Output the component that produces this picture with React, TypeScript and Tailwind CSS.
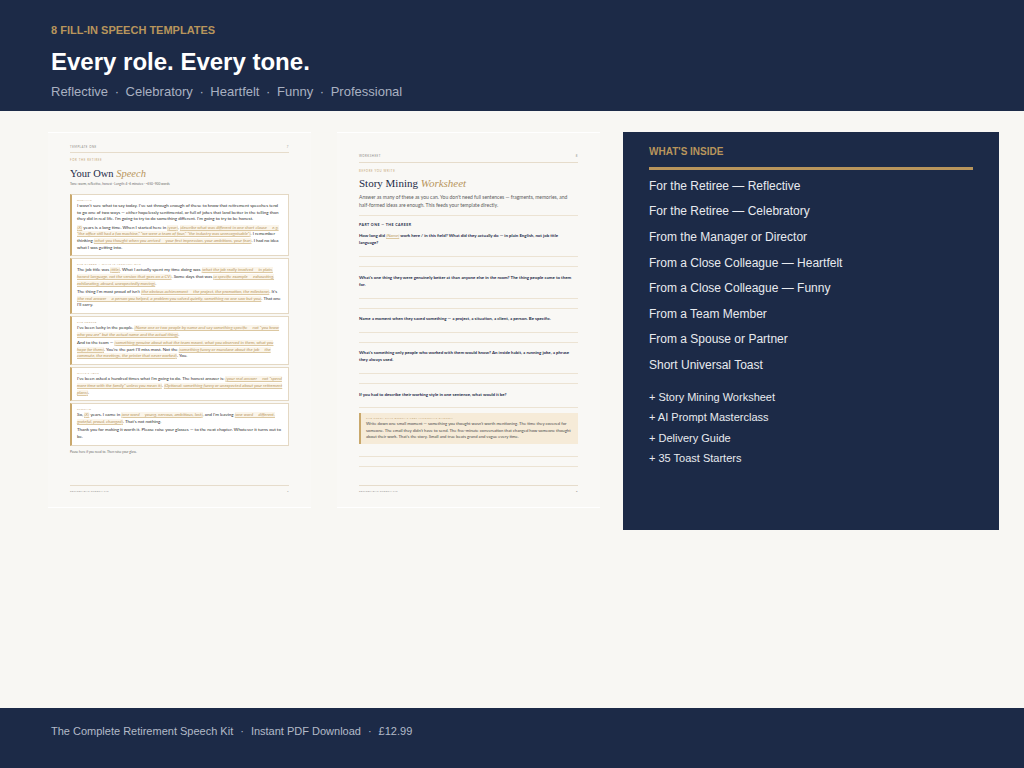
import React from 'react';

const navy = 'bg-[#1c2a47]';

function Ph({ children }: { children: React.ReactNode }) {
  return <span className="italic text-[#b8955c] underline decoration-[#dcc8a2] bg-[#fbf5ea]">[{children}]</span>;
}

function Box({ label, children }: { label: string; children: React.ReactNode }) {
  return (
    <div className="bg-white border border-[#e4d8c3] border-l-2 border-l-[#c9a86c] pl-[5px] pr-[5px] pt-[3px] pb-[4px]">
      <div className="text-[2.6px] leading-[4px] tracking-[0.18em] uppercase text-[#c0a170] mb-[1px]">{label}</div>
      <div className="flex flex-col gap-[1.5px] text-[4.45px] leading-[6.7px] text-[#2d2d2d]">{children}</div>
    </div>
  );
}

function PageOne() {
  return (
    <div className="w-[263px] h-[376px] shrink-0 bg-[#f9f8f5] border-t border-b border-white px-[22px] pt-[12px] flex flex-col" style={{ fontFamily: 'Lato, "Noto Sans", sans-serif' }}>
      <div className="flex justify-between text-[2.8px] leading-[4px] tracking-[0.18em] uppercase text-[#8c8a86] pb-[3px] border-b border-[#e6dccb]">
        <span>Template One</span>
        <span>7</span>
      </div>
      <div className="mt-[5px] text-[2.8px] leading-[4px] tracking-[0.22em] uppercase text-[#c7a877]">For the Retiree</div>
      <div className="mt-[6px] text-[10.5px] leading-[12px] text-[#1c2a47]" style={{ fontFamily: '"Liberation Serif", serif' }}>
        Your Own <span className="italic text-[#b8955c]">Speech</span>
      </div>
      <div className="mt-[2px] text-[3.2px] leading-[4px] text-[#6b6b6b]">Tone: warm, reflective, honest · Length: 4–6 minutes · ~650–900 words</div>
      <div className="mt-[8px] flex flex-col gap-[2px]">
        <Box label="Opening">
          <p>I wasn't sure what to say today. I've sat through enough of these to know that retirement speeches tend to go one of two ways — either hopelessly sentimental, or full of jokes that land better in the telling than they did in real life. I'm going to try to do something different. I'm going to try to be honest.</p>
          <p><Ph>X</Ph> years is a long time. When I started here in <Ph>year</Ph>, <Ph>describe what was different in one short clause — e.g. "the office still had a fax machine," "we were a team of four," "the industry was unrecognisable"</Ph>. I remember thinking <Ph>what you thought when you arrived — your first impression, your ambitions, your fear</Ph>. I had no idea what I was getting into.</p>
        </Box>
        <Box label="The Career — What It Actually Was">
          <p>The job title was <Ph>title</Ph>. What I actually spent my time doing was <Ph>what the job really involved — in plain, honest language, not the version that goes on a CV</Ph>. Some days that was <Ph>a specific example — exhausting, exhilarating, absurd, unexpectedly moving</Ph>.</p>
          <p>The thing I'm most proud of isn't <Ph>the obvious achievement — the project, the promotion, the milestone</Ph>. It's <Ph>the real answer — a person you helped, a problem you solved quietly, something no one saw but you</Ph>. That one I'll carry.</p>
        </Box>
        <Box label="The People">
          <p>I've been lucky in the people. <Ph>Name one or two people by name and say something specific — not "you know who you are" but the actual name and the actual thing</Ph>.</p>
          <p>And to the team — <Ph>something genuine about what the team meant, what you observed in them, what you hope for them</Ph>. You're the part I'll miss most. Not the <Ph>something funny or mundane about the job — the commute, the meetings, the printer that never worked</Ph>. You.</p>
        </Box>
        <Box label="What's Next">
          <p>I've been asked a hundred times what I'm going to do. The honest answer is: <Ph>your real answer — not "spend more time with the family" unless you mean it</Ph>. <Ph>Optional: something funny or unexpected about your retirement plans</Ph>.</p>
        </Box>
        <Box label="Closing">
          <p>So, <Ph>X</Ph> years. I came in <Ph>one word — young, nervous, ambitious, lost</Ph>, and I'm leaving <Ph>one word — different, grateful, proud, changed</Ph>. That's not nothing.</p>
          <p>Thank you for making it worth it. Please raise your glasses — to the next chapter. Whatever it turns out to be.</p>
        </Box>
      </div>
      <div className="mt-[4px] text-[3.2px] leading-[4px] text-[#6b6b6b]">Pause here if you need to. Then raise your glass.</div>
      <div className="mt-auto mb-[14px] pt-[3px] border-t border-[#e6dccb] flex justify-between text-[2.6px] leading-[4px] tracking-[0.15em] uppercase text-[#8c8a86]">
        <span>Retirement Speech Kit</span>
        <span>7</span>
      </div>
    </div>
  );
}

function Q({ children, lines, first = 11, mt = 'mt-[6.3px]' }: { children: React.ReactNode; lines: number; first?: number; mt?: string }) {
  return (
    <div className={mt}>
      <div className="text-[4.4px] leading-[7px] font-bold text-[#1c2a47]">{children}</div>
      <div className="border-b border-[#ece3d3]" style={{ height: first }} />
      {lines > 1 && <div className="h-[10px] border-b border-[#ece3d3]" />}
    </div>
  );
}

function PageTwo() {
  return (
    <div className="w-[263px] h-[376px] shrink-0 bg-[#f9f8f5] border-t border-b border-white px-[22px] pt-[21px] flex flex-col" style={{ fontFamily: 'Lato, "Noto Sans", sans-serif' }}>
      <div className="flex justify-between text-[2.8px] leading-[4px] tracking-[0.18em] uppercase text-[#8c8a86] pb-[4px] border-b border-[#e6dccb]">
        <span>Worksheet</span>
        <span>8</span>
      </div>
      <div className="mt-[6px] text-[2.8px] leading-[4px] tracking-[0.22em] uppercase text-[#c7a877]">Before You Write</div>
      <div className="mt-[4px] text-[11px] leading-[13px] text-[#1c2a47]" style={{ fontFamily: '"Liberation Serif", serif' }}>
        Story Mining <span className="italic text-[#b8955c]">Worksheet</span>
      </div>
      <p className="mt-[4px] pb-[6px] border-b border-[#ece3d3] text-[5px] leading-[7.7px] text-[#5c5c5c]">
        Answer as many of these as you can. You don't need full sentences — fragments, memories, and half-formed ideas are enough. This feeds your template directly.
      </p>
      <div className="mt-[7px] text-[3.6px] leading-[4px] font-bold tracking-[0.12em] uppercase text-[#1c2a47]">Part One — The Career</div>
      <Q lines={2} mt="mt-[5px]">How long did <span className="italic font-normal text-[#b8955c] underline decoration-[#dcc8a2]">[Name]</span> work here / in this field? What did they actually do — in plain English, not job title language?</Q>
      <Q lines={2}>What's one thing they were genuinely better at than anyone else in the room? The thing people came to them for.</Q>
      <Q lines={2}>Name a moment when they saved something — a project, a situation, a client, a person. Be specific.</Q>
      <Q lines={2}>What's something only people who worked with them would know? An inside habit, a running joke, a phrase they always used.</Q>
      <Q lines={1} first={10.5}>If you had to describe their working style in one sentence, what would it be?</Q>
      <div className="mt-[5px] bg-[#f6ebd8] border-l-2 border-[#c9a86c] pl-[5px] pr-[5px] pt-[3px] pb-[3px]">
        <div className="text-[2.6px] leading-[4px] tracking-[0.18em] uppercase text-[#c0a170] mb-[1px]">The Story That Doesn't Feel Important Enough</div>
        <p className="text-[4.2px] leading-[6.5px] text-[#4a4a4a]">Write down one small moment — something you thought wasn't worth mentioning. The time they covered for someone. The email they didn't have to send. The five-minute conversation that changed how someone thought about their work. That's the story. Small and true beats grand and vague every time.</p>
      </div>
      <div className="h-[13px] border-b border-[#ece3d3]" />
      <div className="h-[10px] border-b border-[#ece3d3]" />
      <div className="mt-auto mb-[14px] pt-[3px] border-t border-[#e6dccb] flex justify-between text-[2.6px] leading-[4px] tracking-[0.15em] uppercase text-[#8c8a86]">
        <span>Retirement Speech Kit</span>
        <span>8</span>
      </div>
    </div>
  );
}

const inside = [
  'For the Retiree — Reflective',
  'For the Retiree — Celebratory',
  'From the Manager or Director',
  'From a Close Colleague — Heartfelt',
  'From a Close Colleague — Funny',
  'From a Team Member',
  'From a Spouse or Partner',
  'Short Universal Toast',
];

const extras = ['+ Story Mining Worksheet', '+ AI Prompt Masterclass', '+ Delivery Guide', '+ 35 Toast Starters'];

export default function App() {
  return (
    <div className="w-[1024px] h-[768px] flex flex-col bg-[#f8f7f3] overflow-hidden" style={{ fontFamily: '"Liberation Sans", Arial, sans-serif' }}>
      <header className={`${navy} h-[111px] shrink-0 px-[51px] pt-[22px]`}>
        <div className="text-[11px] leading-[16px] font-bold text-[#b8955c] uppercase">8 Fill-in Speech Templates</div>
        <h1 className="mt-[9px] text-[24px] leading-[30px] font-bold text-white">Every role. Every tone.</h1>
        <div className="mt-[5px] text-[13px] leading-[20px] text-[#a9b1c1] flex gap-[6.6px]">
          <span>Reflective</span><span>·</span><span>Celebratory</span><span>·</span><span>Heartfelt</span><span>·</span><span>Funny</span><span>·</span><span>Professional</span>
        </div>
      </header>

      <main className="flex-1 flex items-start pt-[21px] pl-[48px]">
        <PageOne />
        <div className="w-[26px] shrink-0" />
        <PageTwo />
        <aside className={`${navy} ml-[23px] w-[376px] h-[398px] shrink-0 px-[26px] pt-[12px]`}>
          <div className="text-[10px] leading-[16px] font-bold text-[#b8955c] uppercase">What's Inside</div>
          <div className="mt-[7px] h-[3px] bg-[#b8955c]" />
          <ul className="mt-[3px]">
            {inside.map((t) => (
              <li key={t} className="h-[25.6px] flex items-center text-[12px] text-[#e8eaef]">{t}</li>
            ))}
          </ul>
          <ul className="mt-[9px]">
            {extras.map((t) => (
              <li key={t} className="h-[20.5px] flex items-center text-[11px] text-[#e8eaef]">{t}</li>
            ))}
          </ul>
        </aside>
      </main>

      <footer className={`${navy} h-[60px] shrink-0 px-[51px] pt-[15px]`}>
        <div className="text-[11px] leading-[16px] text-[#b3bac7] flex gap-[7px]">
          <span>The Complete Retirement Speech Kit</span><span>·</span><span>Instant PDF Download</span><span>·</span><span>£12.99</span>
        </div>
      </footer>
    </div>
  );
}
